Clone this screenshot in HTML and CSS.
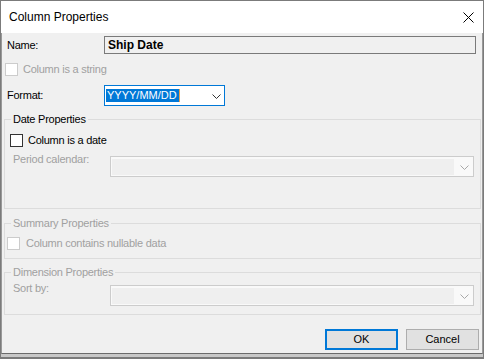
FILE: index.html
```html
<!DOCTYPE html>
<html lang="en">
<head>
  <meta charset="UTF-8">
  <title>Column Properties</title>
  <link rel="stylesheet" href="styles.css">
</head>
<body>
  <div class="window">
    <!-- barra de titulo -->
    <div class="titlebar">
      <span class="title">Column Properties</span>
      <svg class="close" width="11" height="11" viewBox="0 0 11 11">
        <path d="M0.5 0.5 L10.5 10.5 M10.5 0.5 L0.5 10.5" stroke="#000" stroke-width="1" fill="none"/>
      </svg>
    </div>

    <div class="dialog">
      <div class="row name-row">
        <span class="label">Name:</span>
        <div class="textbox">Ship Date</div>
      </div>

      <div class="check string-check disabled">
        <span class="box"></span>
        <span>Column is a string</span>
      </div>

      <div class="row format-row">
        <span class="label">Format:</span>
        <div class="combo focused">
          <span class="selected">YYYY/MM/DD</span>
          <svg class="chevron" width="9" height="5" viewBox="0 0 9 5">
            <path d="M0.5 0.5 L4.5 4.5 L8.5 0.5" stroke="#333" stroke-width="1" fill="none"/>
          </svg>
        </div>
      </div>

      <!-- grupo fecha -->
      <fieldset class="group date-group">
        <legend>Date Properties</legend>
        <div class="check date-check">
          <span class="box"></span>
          <span>Column is a date</span>
        </div>
        <div class="row combo-row period-row">
          <span class="label disabled-text">Period calendar:</span>
          <div class="combo wide disabled">
            <span class="field"></span>
            <svg class="chevron" width="9" height="5" viewBox="0 0 9 5">
              <path d="M0.5 0.5 L4.5 4.5 L8.5 0.5" stroke="#a8a8a8" stroke-width="1" fill="none"/>
            </svg>
          </div>
        </div>
      </fieldset>

      <!-- grupo resumen -->
      <fieldset class="group summary-group">
        <legend class="disabled-text">Summary Properties</legend>
        <div class="check nullable-check disabled">
          <span class="box"></span>
          <span>Column contains nullable data</span>
        </div>
      </fieldset>

      <!-- grupo dimension -->
      <fieldset class="group dimension-group">
        <legend class="disabled-text">Dimension Properties</legend>
        <div class="row combo-row sort-row">
          <span class="label disabled-text">Sort by:</span>
          <div class="combo wide disabled">
            <span class="field"></span>
            <svg class="chevron" width="9" height="5" viewBox="0 0 9 5">
              <path d="M0.5 0.5 L4.5 4.5 L8.5 0.5" stroke="#a8a8a8" stroke-width="1" fill="none"/>
            </svg>
          </div>
        </div>
      </fieldset>

      <div class="buttons">
        <button class="btn default">OK</button>
        <button class="btn">Cancel</button>
      </div>
    </div>
    <div class="frame-edge"></div>
  </div>
</body>
</html>
```

FILE: styles.css
```css
/* dialogo propiedades */

*{
  margin: 0;
  padding: 0;
  box-sizing: border-box;
}

:root{
  --face:#f0f0f0;
  --accent:#0078d7;
  --gray-text:#a0a0a0;
  --group-line:#dcdcdc;
}

body{
  font-family: "Liberation Sans", Arial, sans-serif;
  font-size: 11px;
  line-height: 13px;
  letter-spacing: -0.25px;
  color: #000;
  background: #fff;
}

/* ventana */
.window{
  width: 484px;
  height: 359px;
  border-style: solid;
  border-color: #7b7b7b;
  border-width: 1px 1px 2px 1px;
  display: flex;
  flex-direction: column;
}

.titlebar{
  height: 32px;
  flex: none;
  background: #fff;
  display: flex;
  align-items: center;
  justify-content: space-between;
  padding: 0 9px 0 8px;
}

.title{
  font-size: 12px;
  letter-spacing: 0;
}

.close{
  display: block;
}

.dialog{
  height: 321px;
  flex: none;
  background: var(--face);
  border-left: 1px solid #999;
  border-right: 1px solid #999;
  border-bottom: 1px solid #6b6b6b;
  display: flex;
  flex-direction: column;
}

.frame-edge{
  height: 3px;
  flex: none;
  background: #c8c8c8;
}

/* filas */
.row{
  display: flex;
  align-items: center;
}

.label{
  width: 97px;
  flex: none;
}

.name-row{
  margin-top: 3px;
  padding-left: 5px;
  height: 18px;
}

.format-row{
  margin-top: 9px;
  padding-left: 5px;
  height: 21px;
}

.textbox{
  width: 372px;
  height: 18px;
  border: 1px solid #7a7a7a;
  background: var(--face);
  padding-left: 3px;
  font-size: 12px;
  font-weight: bold;
  line-height: 16px;
  letter-spacing: 0;
}

/* combos */
.combo{
  height: 21px;
  border: 1px solid #ccc;
  display: flex;
  align-items: center;
  justify-content: space-between;
}

.combo .chevron{
  display: block;
  margin-right: 3px;
}

.combo.focused{
  width: 121px;
  border-color: var(--accent);
  background: #fff;
}

.combo.focused .chevron{
  margin-top: 2px;
}

.selected{
  margin-left: 1px;
  padding: 0 2px 0 1px;
  height: 13px;
  background: var(--accent);
  color: #fff;
  letter-spacing: 0;
  border-right: 1px solid #e8a050;
}

.combo.wide{
  width: 364px;
  background: #f9f9f9;
}

.combo.wide .field{
  width: 342px;
  height: 16px;
  margin-left: 1px;
  background: #efefef;
}

.combo.wide .chevron{
  margin-right: 4px;
  margin-top: 1px;
}

.combo-row{
  align-items: flex-start;
  padding-left: 8px;
}

.combo-row .label{
  margin-top: -3px;
}

.period-row{
  margin-top: 9px;
}

.sort-row{
  margin-top: 6px;
}

/* checkbox */
.check{
  display: flex;
  align-items: center;
  height: 13px;
}

.check .box{
  width: 13px;
  height: 13px;
  border: 1px solid #333;
  background: #fff;
  margin-right: 5px;
}

.check.disabled{
  color: var(--gray-text);
}

.check.disabled .box{
  border-color: #ccc;
}

.string-check{
  margin-top: 9px;
  margin-left: 3px;
}

.date-check{
  margin-top: 8px;
  margin-left: 5px;
}

.nullable-check{
  margin-top: 7px;
  margin-left: 2px;
}

.nullable-check .box{
  margin-right: 6px;
}

/* grupos */
.group{
  border: 1px solid var(--group-line);
  margin: 0 1px 0 2px;
  padding: 0;
  min-width: 0;
}

.group legend{
  margin-left: 6px;
  padding: 0 2px;
  line-height: 13px;
}

.date-group{
  margin-top: 7px;
  padding-bottom: 31px;
}

.summary-group{
  margin-top: 8px;
  padding-bottom: 8px;
}

.dimension-group{
  margin-top: 7px;
  padding-bottom: 8px;
}

.disabled-text{
  color: var(--gray-text);
}

/* botones */
.buttons{
  margin-top: 14px;
  padding-right: 3px;
  display: flex;
  justify-content: flex-end;
  gap: 8px;
}

.btn{
  width: 73px;
  height: 21px;
  font: inherit;
  letter-spacing: 0;
  color: #000;
  background: #e1e1e1;
  border: 1px solid #adadad;
}

.btn.default{
  border: 2px solid var(--accent);
}
```
